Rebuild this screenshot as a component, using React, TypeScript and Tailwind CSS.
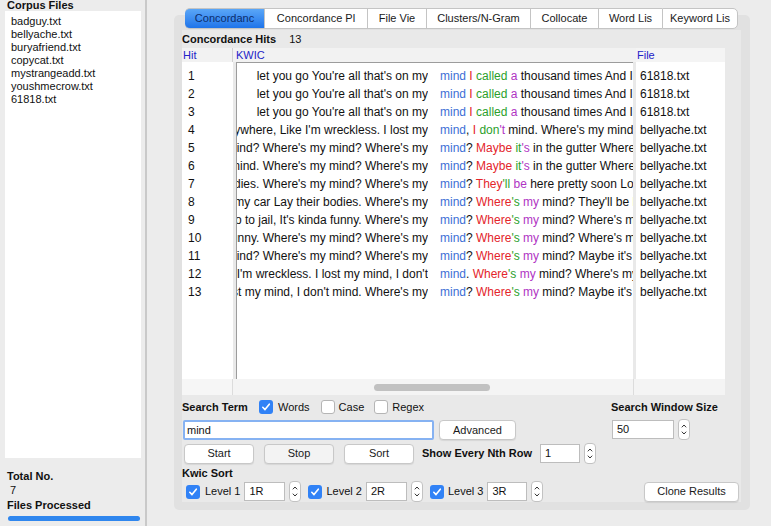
import React from "react";

type Seg = { t: string; c?: "r" | "g" | "p" };

interface Hit {
  left: string;
  kw: string;
  right: Seg[];
  file: string;
}

const corpusFiles = [
  "badguy.txt",
  "bellyache.txt",
  "buryafriend.txt",
  "copycat.txt",
  "mystrangeadd.txt",
  "youshmecrow.txt",
  "61818.txt",
];

const called: Seg[] = [
  { t: " " },
  { t: "I", c: "r" },
  { t: " " },
  { t: "called", c: "g" },
  { t: " " },
  { t: "a", c: "p" },
  { t: " thousand times And I wanted" },
];

const maybe: Seg[] = [
  { t: "?  " },
  { t: "Maybe", c: "r" },
  { t: " " },
  { t: "it", c: "g" },
  { t: "'s", c: "p" },
  { t: " in the gutter Where's my" },
];

const wheres = (rest: string): Seg[] => [
  { t: "? " },
  { t: "Where", c: "r" },
  { t: "'s", c: "g" },
  { t: " " },
  { t: "my", c: "p" },
  { t: rest },
];

const hits: Hit[] = [
  { left: "let you go You're all that's on my", kw: "mind", right: called, file: "61818.txt" },
  { left: "let you go You're all that's on my", kw: "mind", right: called, file: "61818.txt" },
  { left: "let you go You're all that's on my", kw: "mind", right: called, file: "61818.txt" },
  {
    left: "Anywhere, Like I'm wreckless.  I lost my",
    kw: "mind",
    right: [
      { t: ", " },
      { t: "I", c: "r" },
      { t: " " },
      { t: "don", c: "g" },
      { t: "'t", c: "p" },
      { t: " mind. Where's my mind?" },
    ],
    file: "bellyache.txt",
  },
  { left: "my mind? Where's my mind? Where's my", kw: "mind", right: maybe, file: "bellyache.txt" },
  { left: "my mind. Where's my mind? Where's my", kw: "mind", right: maybe, file: "bellyache.txt" },
  {
    left: "their bodies.  Where's my mind? Where's my",
    kw: "mind",
    right: [
      { t: "?  " },
      { t: "They", c: "r" },
      { t: "'ll", c: "g" },
      { t: " " },
      { t: "be", c: "p" },
      { t: " here pretty soon Look" },
    ],
    file: "bellyache.txt",
  },
  { left: "in my car Lay their bodies.  Where's my", kw: "mind", right: wheres(" mind?  They'll be here"), file: "bellyache.txt" },
  { left: "go to jail, It's kinda funny.  Where's my", kw: "mind", right: wheres(" mind? Where's my mind"), file: "bellyache.txt" },
  { left: "kinda funny.  Where's my mind? Where's my", kw: "mind", right: wheres(" mind? Where's my mind"), file: "bellyache.txt" },
  { left: "my mind? Where's my mind? Where's my", kw: "mind", right: wheres(" mind?  Maybe it's in"), file: "bellyache.txt" },
  {
    left: "Like I'm wreckless.  I lost my mind, I don't",
    kw: "mind",
    right: [
      { t: ". " },
      { t: "Where", c: "r" },
      { t: "'s", c: "g" },
      { t: " " },
      { t: "my", c: "p" },
      { t: " mind? Where's my mind" },
    ],
    file: "bellyache.txt",
  },
  { left: "I lost my mind, I don't mind. Where's my", kw: "mind", right: wheres(" mind?  Maybe it's in"), file: "bellyache.txt" },
];

const segColor = { r: "text-[#e4252b]", g: "text-[#2b9f2b]", p: "text-[#b034c4]" };

const tabs = [
  { label: "Concordanc", w: "w-[79px]" },
  { label: "Concordance Pl", w: "w-[103px]" },
  { label: "File Vie", w: "w-[59px]" },
  { label: "Clusters/N-Gram", w: "w-[104px]" },
  { label: "Collocate", w: "w-[68px]" },
  { label: "Word Lis", w: "w-[64px]" },
  { label: "Keyword Lis", w: "w-[76px]" },
];

function Check({ on }: { on?: boolean }) {
  return on ? (
    <span className="w-[14px] h-[14px] rounded-[3px] bg-[#3182f6] flex items-center justify-center shrink-0">
      <svg width="10" height="10" viewBox="0 0 10 10">
        <path d="M1.8 5.3 L4 7.6 L8.3 2.2" fill="none" stroke="white" strokeWidth="1.6" strokeLinecap="round" strokeLinejoin="round" />
      </svg>
    </span>
  ) : (
    <span className="block w-[14px] h-[14px] rounded-[3px] bg-white border border-[#b5b5b5] shrink-0" />
  );
}

function Stepper() {
  return (
    <span className="w-[12px] h-[21px] rounded-[4px] bg-white border border-[#c2c2c2] flex flex-col items-center justify-center gap-[3px] shrink-0">
      <svg width="6" height="4" viewBox="0 0 6 4">
        <path d="M0.8 3.3 L3 1 L5.2 3.3" fill="none" stroke="#333" strokeWidth="1" />
      </svg>
      <svg width="6" height="4" viewBox="0 0 6 4">
        <path d="M0.8 0.7 L3 3 L5.2 0.7" fill="none" stroke="#333" strokeWidth="1" />
      </svg>
    </span>
  );
}

function Field({ value, w }: { value: string; w: string }) {
  return (
    <span className={`${w} h-[19px] bg-white border border-[#bdbdbd] flex items-center pl-[4px] text-[11px] text-[#111] shrink-0`}>
      {value}
    </span>
  );
}

function Btn({ label, w, dim }: { label: string; w: string; dim?: boolean }) {
  return (
    <span
      className={`${w} h-[20px] rounded-[4px] border border-[#c8c8c8] ${dim ? "bg-[#f3f3f3]" : "bg-white"} shadow-[0_1px_1px_rgba(0,0,0,0.08)] flex items-center justify-center text-[11px] text-[#1a1a1a] shrink-0`}
    >
      {label}
    </span>
  );
}

export default function App() {
  return (
    <div className="w-[771px] h-[526px] bg-[#ececec] flex overflow-hidden font-['Liberation_Sans',Arial,sans-serif] text-[#111]">
      {/* corpus side */}
      <div className="w-[147px] shrink-0 border-r-2 border-[#c9c9c9] flex flex-col pl-[5px] pr-[4px]">
        <div className="pl-[2px] text-[11px] font-bold leading-[11px] h-[11px]">Corpus Files</div>
        <div className="h-[447px] bg-white pt-[4px] pl-[6px] text-[11px] leading-[13px]">
          {corpusFiles.map((f) => (
            <div key={f}>{f}</div>
          ))}
        </div>
        <div className="pl-[2px] mt-[12px] text-[11px] font-bold leading-[13px]">Total No.</div>
        <div className="pl-[5px] mt-[1px] text-[11px] leading-[13px]">7</div>
        <div className="pl-[2px] mt-[2px] text-[11px] font-bold leading-[13px]">Files Processed</div>
        <div className="ml-[3px] mt-[4px] h-[5px] w-[132px] rounded-full bg-[#2f86ee]" />
      </div>

      {/* main */}
      <div className="flex-1 flex flex-col pl-[27px] pr-[21px]">
        <div className="relative z-10 flex mt-[8px] ml-[11px] h-[21px]">
          {tabs.map((t, i) => (
            <div
              key={t.label}
              className={`${t.w} h-[21px] overflow-hidden whitespace-nowrap flex items-center justify-center text-[11px] border-y border-[#c4c4c4] ${
                i === 0
                  ? "rounded-l-[5px] bg-gradient-to-b from-[#5aa6f7] to-[#1e74ea] border-[#2a70d0] text-[#0c2d6b]"
                  : "bg-white text-[#1a1a1a] border-l"
              } ${i === tabs.length - 1 ? "rounded-r-[5px] border-r" : ""}`}
            >
              {t.label}
            </div>
          ))}
        </div>

        <div className="-mt-[14px] h-[495px] rounded-[5px] bg-[#e1e1e1] pt-[15px] pl-[8px] pr-[9px] pb-[8px] flex">
          <div className="flex-1 bg-[#e9e9e9] flex flex-col">
            <div className="flex items-center h-[18px] text-[11px]">
              <span className="font-bold">Concordance Hits</span>
              <span className="ml-[13px]">13</span>
            </div>

            {/* table */}
            <div className="flex flex-col">
              <div className="flex h-[14px] text-[11px] text-[#2323c8] leading-[14px]">
                <div className="w-[51px] pl-[1px] bg-[#f2f2f2] border-r border-[#d0d0d0]">Hit</div>
                <div className="w-[403px] pl-[3px] bg-[#f2f2f2]">KWIC</div>
                <div className="w-[89px] pl-[1px] bg-[#f4f4f4]">File</div>
              </div>
              <div className="flex h-[317px] text-[12px] leading-[18px]">
                <div className="w-[51px] bg-white pt-[5px] pl-[6px]">
                  {hits.map((_, i) => (
                    <div key={i}>{i + 1}</div>
                  ))}
                </div>
                <div className="w-[3px]" />
                <div className="w-[397px] bg-white border-t border-l border-[#9c9c9c] pt-[4px] overflow-hidden">
                  {hits.map((h, i) => (
                    <div key={i} className="flex h-[18px] whitespace-nowrap">
                      <div className="w-[191px] shrink-0 flex justify-end overflow-hidden">
                        <span className="shrink-0">{h.left}</span>
                      </div>
                      <div className="ml-[12px] flex-1 overflow-hidden">
                        <span className="text-[#3d6fd6]">{h.kw}</span>
                        {h.right.map((s, j) => (
                          <span key={j} className={s.c ? segColor[s.c] : ""}>
                            {s.t}
                          </span>
                        ))}
                      </div>
                    </div>
                  ))}
                </div>
                <div className="w-[3px]" />
                <div className="w-[89px] bg-white pt-[5px] pl-[4px] overflow-hidden whitespace-nowrap">
                  {hits.map((h, i) => (
                    <div key={i}>{h.file}</div>
                  ))}
                </div>
              </div>
              <div className="flex h-[16px]">
                <div className="w-[51px] bg-[#f6f6f6] border-r border-[#dcdcdc]" />
                <div className="w-[400px] bg-[#f4f4f4] flex items-center">
                  <span className="ml-[141px] w-[116px] h-[7px] rounded-full bg-[#c1c1c1]" />
                </div>
                <div className="w-[92px] bg-[#f4f4f4] border-l border-[#dcdcdc]" />
              </div>
            </div>

            {/* controls */}
            <div className="flex mt-[5px]">
              <div className="w-[429px] flex flex-col">
                <div className="flex items-center h-[14px] text-[11px]">
                  <span className="w-[77px] font-bold">Search Term</span>
                  <Check on />
                  <span className="ml-[5px]">Words</span>
                  <span className="ml-[11px]">
                    <Check />
                  </span>
                  <span className="ml-[4px]">Case</span>
                  <span className="ml-[10px]">
                    <Check />
                  </span>
                  <span className="ml-[4px]">Regex</span>
                </div>
                <div className="flex items-center mt-[6px] h-[20px]">
                  <span className="ml-[1px] w-[251px] h-[20px] bg-white border-2 border-[#86b2f2] rounded-[2px] flex items-center pl-[2px] text-[11px]">
                    mind
                  </span>
                  <span className="ml-[5px]">
                    <Btn label="Advanced" w="w-[77px]" />
                  </span>
                </div>
              </div>
              <div className="flex flex-col">
                <div className="h-[14px] flex items-center text-[11px] font-bold">Search Window Size</div>
                <div className="flex items-center mt-[5px] ml-[1px] h-[21px]">
                  <Field value="50" w="w-[62px]" />
                  <span className="ml-[4px]">
                    <Stepper />
                  </span>
                </div>
              </div>
            </div>

            <div className="flex items-center mt-[3px] h-[21px]">
              <span className="ml-[2px]">
                <Btn label="Start" w="w-[70px]" />
              </span>
              <span className="ml-[10px]">
                <Btn label="Stop" w="w-[70px]" dim />
              </span>
              <span className="ml-[10px]">
                <Btn label="Sort" w="w-[70px]" />
              </span>
              <span className="ml-[8px] text-[11px] font-bold">Show Every Nth Row</span>
              <span className="ml-[8px]">
                <Field value="1" w="w-[40px]" />
              </span>
              <span className="ml-[4px]">
                <Stepper />
              </span>
            </div>

            <div className="mt-[3px] h-[13px] text-[11px] font-bold leading-[13px]">Kwic Sort</div>

            <div className="flex items-center mt-[1px] h-[21px] text-[11px]">
              <span className="ml-[4px]">
                <Check on />
              </span>
              <span className="ml-[5px]">Level 1</span>
              <span className="ml-[4px]">
                <Field value="1R" w="w-[41px]" />
              </span>
              <span className="ml-[4px]">
                <Stepper />
              </span>
              <span className="ml-[7px]">
                <Check on />
              </span>
              <span className="ml-[4px]">Level 2</span>
              <span className="ml-[4px]">
                <Field value="2R" w="w-[41px]" />
              </span>
              <span className="ml-[4px]">
                <Stepper />
              </span>
              <span className="ml-[7px]">
                <Check on />
              </span>
              <span className="ml-[4px]">Level 3</span>
              <span className="ml-[4px]">
                <Field value="3R" w="w-[40px]" />
              </span>
              <span className="ml-[4px]">
                <Stepper />
              </span>
              <span className="ml-auto mr-[2px]">
                <Btn label="Clone Results" w="w-[95px]" />
              </span>
            </div>
          </div>
        </div>
      </div>
    </div>
  );
}
